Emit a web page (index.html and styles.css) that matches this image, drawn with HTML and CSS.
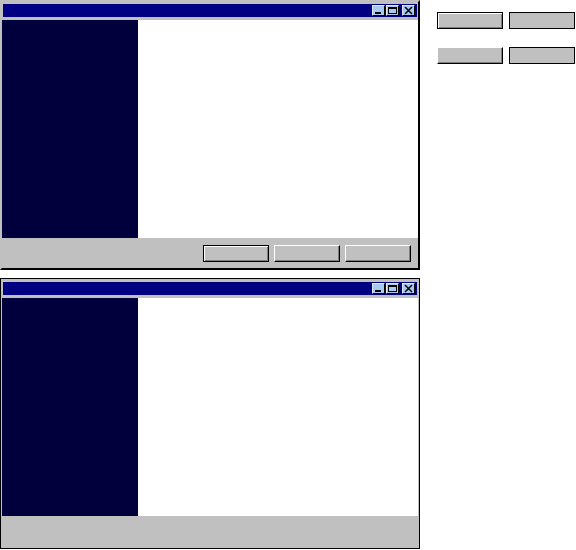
FILE: index.html
```html
<!DOCTYPE html>
<html>
<head>
<meta charset="utf-8">
<link rel="stylesheet" href="styles.css">
</head>
<body>
<div class="page">
  <div class="windows">
    <div class="window">
      <div class="titlebar">
        <span class="tbtn"><svg width="11" height="9" viewBox="0 0 11 9"><rect x="2" y="6" width="6" height="2" fill="#000"/></svg></span>
        <span class="tbtn"><svg width="11" height="9" viewBox="0 0 11 9"><rect x="1.5" y="1.5" width="8" height="6" fill="none" stroke="#000"/><rect x="1" y="1" width="9" height="2" fill="#000"/></svg></span>
        <span class="tbtn close"><svg width="11" height="9" viewBox="0 0 11 9"><path d="M2 1 L9 8 M9 1 L2 8" stroke="#000" stroke-width="1.5"/></svg></span>
      </div>
      <div class="main">
        <div class="sidebar"></div>
        <div class="content"></div>
      </div>
      <div class="footer">
        <button class="btn default"></button>
        <button class="btn"></button>
        <button class="btn"></button>
      </div>
    </div>
    <div class="window active">
      <div class="titlebar">
        <span class="tbtn"><svg width="11" height="9" viewBox="0 0 11 9"><rect x="2" y="6" width="6" height="2" fill="#000"/></svg></span>
        <span class="tbtn"><svg width="11" height="9" viewBox="0 0 11 9"><rect x="1.5" y="1.5" width="8" height="6" fill="none" stroke="#000"/><rect x="1" y="1" width="9" height="2" fill="#000"/></svg></span>
        <span class="tbtn close"><svg width="11" height="9" viewBox="0 0 11 9"><path d="M2 1 L9 8 M9 1 L2 8" stroke="#000" stroke-width="1.5"/></svg></span>
      </div>
      <div class="main">
        <div class="sidebar"></div>
        <div class="content"></div>
      </div>
      <div class="footer"></div>
    </div>
  </div>
  <div class="side">
    <button class="btn default"></button>
    <button class="btn pressed"></button>
    <button class="btn"></button>
    <button class="btn pressed"></button>
  </div>
</div>
</body>
</html>
```
FILE: styles.css
```css
html, body {
  margin: 0;
  padding: 0;
  background: #fff;
  font-family: "Liberation Sans", Arial, sans-serif;
}
.page {
  display: flex;
  align-items: flex-start;
  gap: 17px;
}
.windows {
  display: flex;
  flex-direction: column;
  gap: 8px;
}
.window {
  width: 420px;
  height: 270px;
  box-sizing: border-box;
  display: flex;
  flex-direction: column;
  background: #c0c0c0;
  border: 2px solid;
  border-color: #c0c0c0 #000 #000 #c0c0c0;
}
.window.active {
  height: 271px;
  border: 1px solid #000;
  padding: 1px;
}
.titlebar {
  height: 13px;
  margin: 2px 1px 3px;
  background: #000080;
  display: flex;
  justify-content: flex-end;
  align-items: center;
  padding-right: 2px;
}
.tbtn {
  width: 11px;
  height: 9px;
  background: #a6caf0;
  border: 1px solid;
  border-color: #dfe8f8 #000 #000 #dfe8f8;
  margin-left: 1px;
  display: flex;
}
.tbtn.close {
  margin-left: 3px;
}
.main {
  display: flex;
  height: 218px;
}
.sidebar {
  width: 136px;
  background: #00003c;
}
.content {
  flex: 1;
  background: #fff;
}
.footer {
  flex: 1;
  display: flex;
  justify-content: flex-end;
  align-items: flex-start;
  gap: 5px;
  padding: 7px 7px 0 0;
}
.btn {
  width: 66px;
  height: 17px;
  box-sizing: border-box;
  padding: 0;
  margin: 0;
  background: #c0c0c0;
  border: 1px solid;
  border-color: #fff #000 #000 #fff;
  box-shadow: inset -1px -1px #808080;
}
.btn.default {
  border-color: #000;
  box-shadow: inset 1px 1px #fff, inset -1px -1px #808080;
}
.btn.pressed {
  border-color: #000;
  box-shadow: none;
}
.side {
  display: grid;
  grid-template-columns: 66px 66px;
  column-gap: 6px;
  row-gap: 18px;
  padding-top: 12px;
}
```
